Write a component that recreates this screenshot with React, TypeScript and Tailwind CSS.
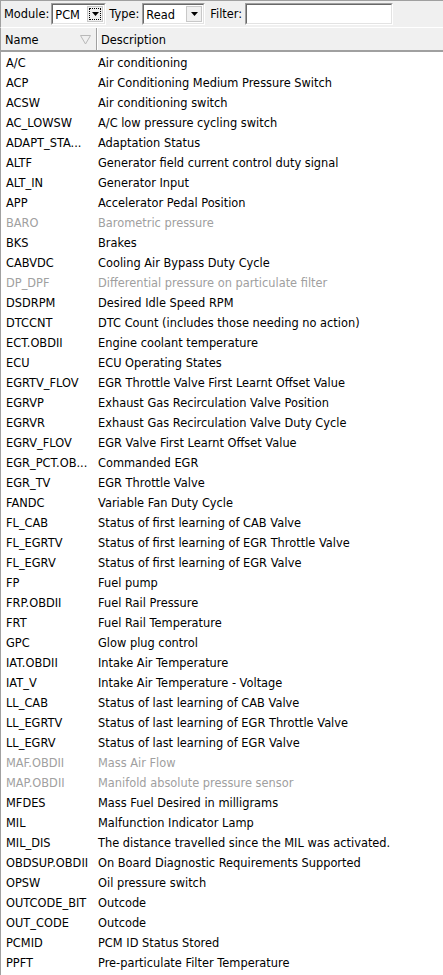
import React from "react";

const rows: [string, string, boolean?][] = [
  ["A/C", "Air conditioning"],
  ["ACP", "Air Conditioning Medium Pressure Switch"],
  ["ACSW", "Air conditioning switch"],
  ["AC_LOWSW", "A/C low pressure cycling switch"],
  ["ADAPT_STA...", "Adaptation Status"],
  ["ALTF", "Generator field current control duty signal"],
  ["ALT_IN", "Generator Input"],
  ["APP", "Accelerator Pedal Position"],
  ["BARO", "Barometric pressure", true],
  ["BKS", "Brakes"],
  ["CABVDC", "Cooling Air Bypass Duty Cycle"],
  ["DP_DPF", "Differential pressure on particulate filter", true],
  ["DSDRPM", "Desired Idle Speed RPM"],
  ["DTCCNT", "DTC Count (includes those needing no action)"],
  ["ECT.OBDII", "Engine coolant temperature"],
  ["ECU", "ECU Operating States"],
  ["EGRTV_FLOV", "EGR Throttle Valve First Learnt Offset Value"],
  ["EGRVP", "Exhaust Gas Recirculation Valve Position"],
  ["EGRVR", "Exhaust Gas Recirculation Valve Duty Cycle"],
  ["EGRV_FLOV", "EGR Valve First Learnt Offset Value"],
  ["EGR_PCT.OB...", "Commanded EGR"],
  ["EGR_TV", "EGR Throttle Valve"],
  ["FANDC", "Variable Fan Duty Cycle"],
  ["FL_CAB", "Status of first learning of CAB Valve"],
  ["FL_EGRTV", "Status of first learning of EGR Throttle Valve"],
  ["FL_EGRV", "Status of first learning of EGR Valve"],
  ["FP", "Fuel pump"],
  ["FRP.OBDII", "Fuel Rail Pressure"],
  ["FRT", "Fuel Rail Temperature"],
  ["GPC", "Glow plug control"],
  ["IAT.OBDII", "Intake Air Temperature"],
  ["IAT_V", "Intake Air Temperature - Voltage"],
  ["LL_CAB", "Status of last learning of CAB Valve"],
  ["LL_EGRTV", "Status of last learning of EGR Throttle Valve"],
  ["LL_EGRV", "Status of last learning of EGR Valve"],
  ["MAF.OBDII", "Mass Air Flow", true],
  ["MAP.OBDII", "Manifold absolute pressure sensor", true],
  ["MFDES", "Mass Fuel Desired in milligrams"],
  ["MIL", "Malfunction Indicator Lamp"],
  ["MIL_DIS", "The distance travelled since the MIL was activated."],
  ["OBDSUP.OBDII", "On Board Diagnostic Requirements Supported"],
  ["OPSW", "Oil pressure switch"],
  ["OUTCODE_BIT", "Outcode"],
  ["OUT_CODE", "Outcode"],
  ["PCMID", "PCM ID Status Stored"],
  ["PPFT", "Pre-particulate Filter Temperature"],
];

const Arrow = () => (
  <svg width="7" height="4" viewBox="0 0 7 4">
    <path d="M0 0H7L3.5 4Z" fill="#000" />
  </svg>
);

export default function App() {
  return (
    <div
      className="w-[443px] h-[975px] overflow-hidden bg-white text-black text-[11.4px] leading-[14px]"
      style={{ fontFamily: "'DejaVu Sans', Tahoma, sans-serif" }}
    >
      {/* toolbar */}
      <div className="h-[28px] bg-[#f0f0f0] border-t border-[#a0a0a0] border-l flex items-center pl-[3px] border-b border-b-white">
        <span>Module:</span>
        <div className="ml-[2px] w-[55px] h-[22px] bg-white border border-t-[#a0a0a0] border-l-[#a0a0a0] border-r-white border-b-white flex items-center">
          <div className="flex-1 h-full border border-t-[#696969] border-l-[#696969] border-r-[#e3e3e3] border-b-[#e3e3e3] flex items-center pl-[2px]">
            <span className="pt-[1px]">PCM</span>
            <div className="ml-auto mr-[1px] w-[16px] h-[16px] bg-[#f0f0f0] border border-[#c8c8c8] flex items-center justify-center">
              <div className="w-[12px] h-[12px] border border-dotted border-black flex items-center justify-center">
                <Arrow />
              </div>
            </div>
          </div>
        </div>
        <span className="ml-[3px]">Type:</span>
        <div className="ml-[3px] w-[63px] h-[22px] bg-white border border-t-[#a0a0a0] border-l-[#a0a0a0] border-r-white border-b-white flex items-center">
          <div className="flex-1 h-full border border-t-[#696969] border-l-[#696969] border-r-[#e3e3e3] border-b-[#e3e3e3] flex items-center pl-[2px]">
            <span className="pt-[1px]">Read</span>
            <div className="ml-auto mr-[1px] w-[16px] h-[16px] bg-[#f0f0f0] border border-[#c8c8c8] flex items-center justify-center">
              <Arrow />
            </div>
          </div>
        </div>
        <span className="ml-[5px]">Filter:</span>
        <div className="ml-[3px] w-[148px] h-[22px] bg-white border border-t-[#a0a0a0] border-l-[#a0a0a0] border-r-white border-b-white">
          <div className="h-full border border-t-[#696969] border-l-[#696969] border-r-[#e3e3e3] border-b-[#e3e3e3]" />
        </div>
      </div>
      {/* header */}
      <div className="h-[24px] bg-[#f0f0f0] border-l border-[#a0a0a0] border-b-2 border-b-[#a0a0a0] flex">
        <div className="w-[96px] flex items-center pl-[4px] pt-[1px] border-r border-[#a0a0a0] relative">
          <span>Name</span>
          <svg className="absolute right-[5px] top-[6px]" width="11" height="11" viewBox="0 0 11 11">
            <path d="M0.5 1.5H10.5L5.5 10Z" fill="none" stroke="#b8b8b8" strokeWidth="1" />
          </svg>
        </div>
        <div className="w-[1px] bg-white" />
        <div className="flex items-center pl-[3px] pt-[1px]">Description</div>
      </div>
      {/* rows */}
      <div className="border-l border-[#a0a0a0] h-full">
        {rows.map(([n, d, dis]) => (
          <div
            key={n}
            className={`h-[20px] flex items-center pt-[1px] ${dis ? "text-[#a0a0a0]" : "text-black"}`}
          >
            <div className="w-[97px] pl-[5px] whitespace-nowrap overflow-hidden">{n}</div>
            <div className="whitespace-nowrap">{d}</div>
          </div>
        ))}
      </div>
    </div>
  );
}
